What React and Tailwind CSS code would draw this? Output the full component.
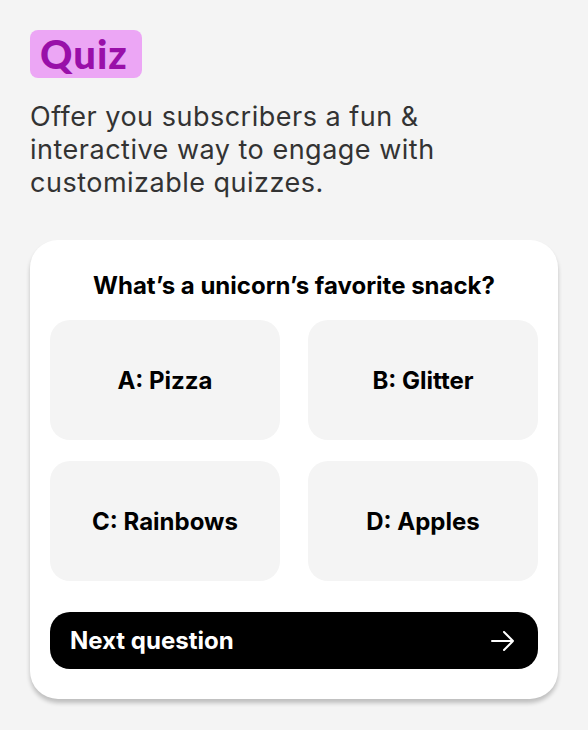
const options = ["A: Pizza", "B: Glitter", "C: Rainbows", "D: Apples"];

export default function App() {
  return (
    <div className="min-h-screen bg-[#f4f4f4] px-[30px] pt-[30px] font-['Inter',sans-serif]">
      <div className="flex h-[48px] w-[112px] items-center rounded-[8px] bg-[#eca6f5] pl-[10px]">
        <span className="font-['Lato',sans-serif] text-[40px] font-black leading-none tracking-[1px] text-[#990fa9]">
          Quiz
        </span>
      </div>

      <p className="mt-[22px] max-w-[450px] text-[27px] leading-[33px] tracking-[0.5px] text-[#333333]">
        Offer you subscribers a fun &amp; interactive way to engage with customizable quizzes.
      </p>

      <div className="mt-[41px] rounded-[28px] bg-white px-[20px] pt-[31px] pb-[30px] shadow-[0_4px_4px_rgba(0,0,0,0.22)]">
        <h2 className="text-center text-[24px] font-bold leading-[30px] text-black">
          What’s a unicorn’s favorite snack?
        </h2>

        <div className="mt-[19px] grid grid-cols-2 gap-x-[28px] gap-y-[21px]">
          {options.map((opt) => (
            <button
              key={opt}
              className="flex h-[120px] items-center justify-center rounded-[20px] bg-[#f4f4f4] pt-[2px] text-[24px] font-bold text-black"
            >
              {opt}
            </button>
          ))}
        </div>

        <button className="mt-[31px] flex h-[57px] w-full items-center justify-between rounded-[20px] bg-black pl-[20px] pr-[24px] text-white">
          <span className="pt-[1px] text-[24px] font-bold">Next question</span>
          <svg width="23" height="20" viewBox="0 0 23 20" fill="none" stroke="currentColor" strokeWidth="2" strokeLinecap="round" strokeLinejoin="round">
            <path d="M1 10H22M13 1L22 10L13 19" />
          </svg>
        </button>
      </div>
    </div>
  );
}
